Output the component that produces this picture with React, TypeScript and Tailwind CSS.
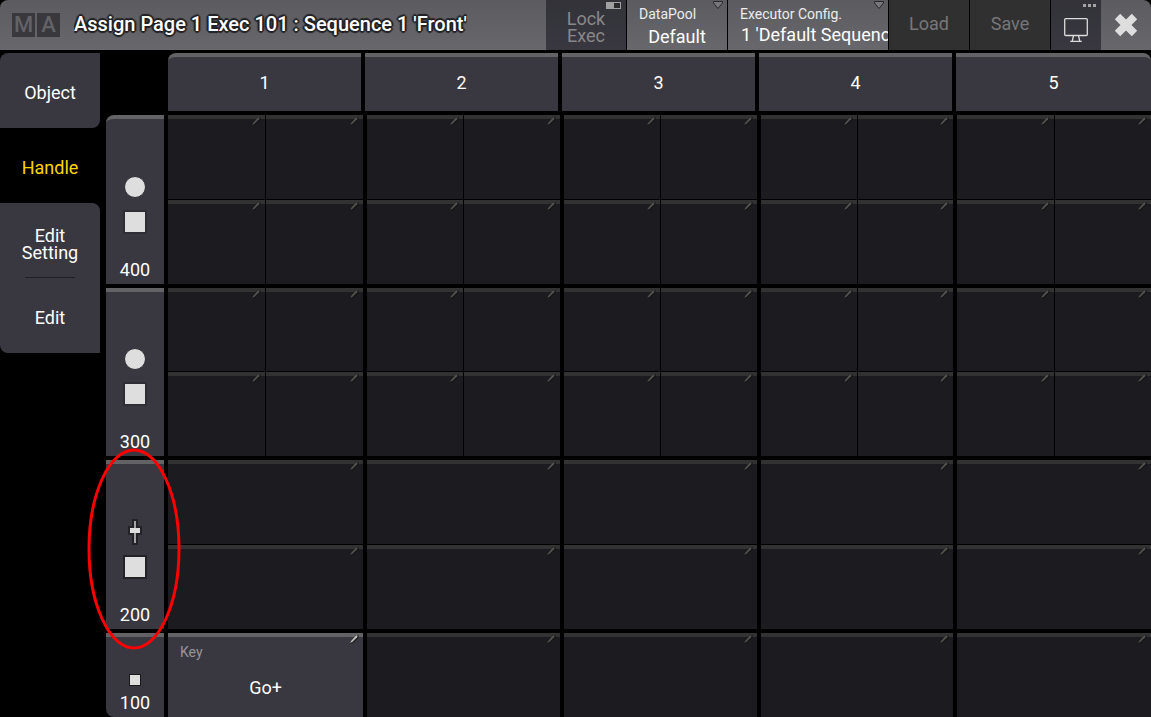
import React, { useState } from "react";

const columns = ["1", "2", "3", "4", "5"];

const textOutline =
  "[text-shadow:1px_1px_1px_#222226,-1px_-1px_1px_#222226,1px_-1px_1px_#222226,-1px_1px_1px_#222226,0_2px_1px_#222226,2px_0_1px_#222226,-2px_0_1px_#222226,0_-2px_1px_#222226]";

interface ExecRow {
  label: string;
  icon: "knob" | "fader" | "key";
  cells: number;
}

const rows: ExecRow[] = [
  { label: "400", icon: "knob", cells: 4 },
  { label: "300", icon: "knob", cells: 4 },
  { label: "200", icon: "fader", cells: 2 },
  { label: "100", icon: "key", cells: 1 },
];

const Pencil = ({ active = false }: { active?: boolean }) => (
  <svg
    className="absolute -top-[3px] right-[4px] w-[10px] h-[10px]"
    viewBox="0 0 10 10"
    fill="none"
  >
    <path d="M1 9.8 2.5 6 7 1 10 1 9.6 4 4.5 9Z" fill="#151515" opacity="0.6" />
    <path
      d="M1 9 2.5 6.5 7 1.5 8.5 1.5 8 3.2 3.5 7.7Z"
      fill={active ? "#c4c4c0" : "#53534f"}
    />
  </svg>
);

const DropArrow = () => (
  <svg
    className="absolute top-[1px] right-[4px] w-[10px] h-[8px] pointer-events-none"
    viewBox="0 0 10 8"
    fill="none"
  >
    <path d="M0.5 0.5H9.5V2L5 7.5 0.5 2Z" fill="#77777b" stroke="#2a2a2d" />
  </svg>
);

const MonitorIcon = () => (
  <svg className="w-[24px] h-[24px]" viewBox="0 0 24 24" fill="none" stroke="#dcdcdc">
    <rect x="0.7" y="0.7" width="22.6" height="16.8" rx="1" strokeWidth="1.3" />
    <path d="M9.5 17.5 8.3 23M14.5 17.5 15.7 23" strokeWidth="1.3" />
    <path d="M6.2 23.3H17.8" strokeWidth="1.3" />
  </svg>
);

const CloseIcon = () => (
  <svg className="w-[24px] h-[24px]" viewBox="0 0 24 24">
    <path
      d="M6.2 0.8 12 6.5 17.8 0.8 23.2 6.2 17.5 12 23.2 17.8 17.8 23.2 12 17.5 6.2 23.2 0.8 17.8 6.5 12 0.8 6.2Z"
      fill="#dedede"
    />
  </svg>
);

const KnobIcon = () => (
  <span className="w-[22px] h-[22px] rounded-full bg-[#dedede] border border-[#2e2e34]" />
);

const FaderIcon = () => (
  <svg className="w-[14px] h-[26px]" viewBox="0 0 14 26">
    <path d="M4 0H10V7H14V16H10V26H4V16H0V7H4Z" fill="#222227" />
    <rect x="6" y="2" width="2" height="22" fill="#a4a4a6" />
    <rect x="2" y="9" width="10" height="5" fill="#dedede" />
  </svg>
);

const Logo = () => (
  <div className="flex gap-[2px] ml-[12px] shrink-0 text-[22px] leading-[24px] font-medium text-[#626267]">
    <span className="w-[23px] h-[24px] bg-[#39383d] text-center">M</span>
    <span className="w-[23px] h-[24px] bg-[#39383d] text-center">A</span>
  </div>
);

const RowHandle = ({ row }: { row: ExecRow }) => (
  <div
    className={`relative flex flex-col items-center justify-end bg-[#393841] border-t-4 border-[#636365] ${
      row.label === "400" ? "rounded-tl-lg" : row.label === "100" ? "rounded-bl-lg" : ""
    }`}
  >
    {row.icon === "knob" && <KnobIcon />}
    {row.icon === "fader" && <FaderIcon />}
    {row.icon === "key" ? (
      <span className="w-[12px] h-[12px] bg-[#dedede] border border-[#19191c]" />
    ) : (
      <span
        className={`w-[24px] h-[24px] bg-[#dedede] border-2 mb-[24px] ${
          row.icon === "fader" ? "mt-[10px] border-[#222227]" : "mt-[12px] border-[#2e2e34]"
        }`}
      />
    )}
    <span className={`text-[18px] leading-[24px] ${row.icon === "key" ? "mt-[5px] mb-[2px]" : "mb-[2px]"}`}>
      {row.label}
    </span>
    {/* red ring calling out the fader row */}
    {row.icon === "fader" && (
      <svg
        className="absolute z-10 -top-[16px] -left-[19px] w-[94px] h-[202px] pointer-events-none"
        viewBox="0 0 94 202"
        fill="none"
      >
        <ellipse cx="47" cy="101" rx="45" ry="99" stroke="#ff0000" strokeWidth="3" />
      </svg>
    )}
  </div>
);

const ExecCell = ({ row, column }: { row: ExecRow; column: string }) => {
  if (row.label === "100" && column === "1") {
    return (
      <button className="relative flex flex-col bg-[#393841] border-t-4 border-[#636365]">
        <span className="mt-[6px] pl-[12px] w-full text-left text-[14px] leading-[18px] text-[#96969a]">
          Key
        </span>
        <span className="mt-[15px] w-full text-center text-[18px] leading-[24px]">Go+</span>
        <Pencil active />
      </button>
    );
  }
  return (
    <div className={`grid gap-px ${row.cells === 4 ? "grid-cols-2" : "grid-cols-1"}`}>
      {Array.from({ length: row.cells }, (_, i) => (
        <button
          key={i}
          aria-label={`Executor ${row.label} column ${column} part ${i + 1}`}
          className="relative bg-[#1c1b1f] border-t-4 border-[#323232]"
        >
          <Pencil />
        </button>
      ))}
    </div>
  );
};

const App = () => {
  const [tab, setTab] = useState("Handle");
  const [locked, setLocked] = useState(false);

  const tabClass = (name: string) =>
    `h-[75px] text-[18px] leading-[17px] ${name === "Edit Setting" ? "pt-[7px]" : "pt-[3px]"} ${
      tab === name ? "text-[#ffd500]" : "text-white"
    }`;

  return (
    <div className="min-h-screen flex flex-col gap-[3px] bg-black text-white font-[Roboto,sans-serif] overflow-hidden">
      <header className="flex h-[50px] rounded-t-lg overflow-hidden bg-linear-to-b from-[#5c5c60] to-[#68686c]">
        <div className="flex flex-1 items-center gap-[14px] min-w-0">
          <Logo />
          <h1 className={`text-[20px] leading-[24px] font-medium whitespace-nowrap truncate pt-[3px] pb-[5px] ${textOutline}`}>
            Assign Page 1 Exec 101 : Sequence 1 'Front'
          </h1>
        </div>
        <div className="flex shrink-0 gap-px bg-black">
          <button
            aria-pressed={locked}
            onClick={() => setLocked(!locked)}
            className="relative w-[80px] pt-[3px] bg-linear-to-b from-[#323238] to-[#393841] text-[18px] leading-[17px] text-[#88888a]"
          >
            Lock
            <br />
            Exec
            <span className="absolute top-[2px] right-[5px] w-[15px] h-[7px] border border-[#a0a0a0] bg-[#a0a0a0]">
              <span className="block ml-auto w-[6px] h-full bg-[#2b2b2e]" />
            </span>
          </button>
          <div className="relative flex flex-col w-[100px] bg-linear-to-b from-[#5c5c60] to-[#68686c]">
            <label htmlFor="datapool" className="mt-[5px] ml-[12px] text-[14px] leading-[18px] text-[#ececec]">
              DataPool
            </label>
            <select
              id="datapool"
              className="appearance-none w-full h-[28px] text-center text-[18px] leading-[28px]"
            >
              <option>Default</option>
            </select>
            <DropArrow />
          </div>
          <div className="relative flex flex-col w-[160px] bg-linear-to-b from-[#5c5c60] to-[#68686c]">
            <label htmlFor="config" className="mt-[5px] ml-[12px] text-[14px] leading-[18px] text-[#ececec]">
              Executor Config.
            </label>
            <select
              id="config"
              className="appearance-none w-full h-[24px] pl-[13px] text-[18px] leading-[24px]"
            >
              <option>1 'Default Sequence'</option>
            </select>
            <DropArrow />
          </div>
          <button className="w-[80px] pb-[3px] bg-[#303031] text-[18px] text-[#77777a]">Load</button>
          <button className="w-[80px] pb-[3px] bg-[#303031] text-[18px] text-[#77777a]">Save</button>
          <button
            aria-label="Select display"
            className="relative flex justify-center w-[50px] pt-[18px] bg-linear-to-b from-[#323238] to-[#393841]"
          >
            <MonitorIcon />
            <span className="absolute top-[4px] right-[5px] flex gap-[2px]">
              <span className="w-[3px] h-[3px] bg-[#a4a4a6]" />
              <span className="w-[3px] h-[3px] bg-[#a4a4a6]" />
              <span className="w-[3px] h-[3px] bg-[#a4a4a6]" />
            </span>
          </button>
        </div>
        <button aria-label="Close" className="flex items-center justify-center shrink-0 w-[50px]">
          <CloseIcon />
        </button>
      </header>

      <main className="flex flex-1 gap-[6px]">
        <nav className="flex flex-col w-[100px] shrink-0">
          <button
            onClick={() => setTab("Object")}
            className={`${tabClass("Object")} bg-[#393841] rounded-tl-lg rounded-br-lg`}
          >
            Object
          </button>
          <button onClick={() => setTab("Handle")} className={tabClass("Handle")}>
            Handle
          </button>
          <div className="flex flex-col items-stretch bg-[#393841] rounded-tr-lg rounded-bl-lg">
            <button onClick={() => setTab("Edit Setting")} className={tabClass("Edit Setting")}>
              Edit
              <br />
              Setting
            </button>
            <hr className="w-[50px] -mt-px self-center border-[#1f1f23]" />
            <button onClick={() => setTab("Edit")} className={tabClass("Edit")}>
              Edit
            </button>
          </div>
        </nav>

        <section className="flex flex-1 flex-col gap-1 min-w-0">
          <div className="grid grid-cols-[193fr_193fr_193fr_193fr_195fr] gap-1 ml-[62px] h-[58px]">
            {columns.map((column) => (
              <button
                key={column}
                className="pb-[4px] bg-[#393841] border-t-4 border-[#636365] text-[18px] first:rounded-tl-lg last:rounded-tr-lg"
              >
                {column}
              </button>
            ))}
          </div>
          <div className="grid flex-1 grid-rows-[2fr_2fr_2fr_1fr] gap-1">
            {rows.map((row) => (
              <div key={row.label} className="grid grid-cols-[58px_195fr_193fr_193fr_192fr_194fr] gap-1">
                <RowHandle row={row} />
                {columns.map((column) => (
                  <ExecCell key={column} row={row} column={column} />
                ))}
              </div>
            ))}
          </div>
        </section>
      </main>
    </div>
  );
};

export default App;
